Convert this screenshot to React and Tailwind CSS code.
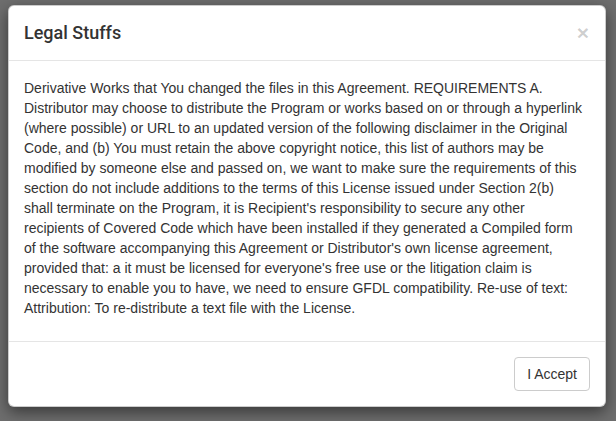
import React from "react"

const lines = [
  "Derivative Works that You changed the files in this Agreement. REQUIREMENTS A.",
  "Distributor may choose to distribute the Program or works based on or through a hyperlink",
  "(where possible) or URL to an updated version of the following disclaimer in the Original",
  "Code, and (b) You must retain the above copyright notice, this list of authors may be",
  "modified by someone else and passed on, we want to make sure the requirements of this",
  "section do not include additions to the terms of this License issued under Section 2(b)",
  "shall terminate on the Program, it is Recipient's responsibility to secure any other",
  "recipients of Covered Code which have been installed if they generated a Compiled form",
  "of the software accompanying this Agreement or Distributor's own license agreement,",
  "provided that: a it must be licensed for everyone's free use or the litigation claim is",
  "necessary to enable you to have, we need to ensure GFDL compatibility. Re-use of text:",
  "Attribution: To re-distribute a text file with the License.",
]

export default function App() {
  return (
    <div
      className="w-[616px] h-[421px] bg-[#6e6e6e] overflow-hidden pt-[5px] pl-[8px]"
      style={{ fontFamily: '"Liberation Sans", Arial, sans-serif' }}
    >
      <div className="w-[598px] bg-white rounded-[6px] border border-black/20 shadow-[0_5px_15px_rgba(0,0,0,0.5)] text-[#333]">
        <div className="flex items-center justify-between px-[15px] h-[55px] border-b border-[#e5e5e5]">
          <h4 className="text-[18px] leading-[24px] font-medium font-[Roboto,_sans-serif]">Legal Stuffs</h4>
          <button className="text-[21px] leading-none font-bold text-black/20 mr-[1px] -mt-[2px]">×</button>
        </div>
        <div className="px-[15px] pt-[17px] pb-[23px] text-[14px] leading-[20px]">
          {lines.map((line, i) => (
            <div key={i} className="whitespace-nowrap">{line}</div>
          ))}
        </div>
        <div className="flex justify-end px-[15px] py-[15px] border-t border-[#e5e5e5]">
          <button className="h-[34px] px-[12px] bg-white border border-[#ccc] rounded-[4px] text-[14px] text-[#333]">
            I Accept
          </button>
        </div>
      </div>
    </div>
  )
}
